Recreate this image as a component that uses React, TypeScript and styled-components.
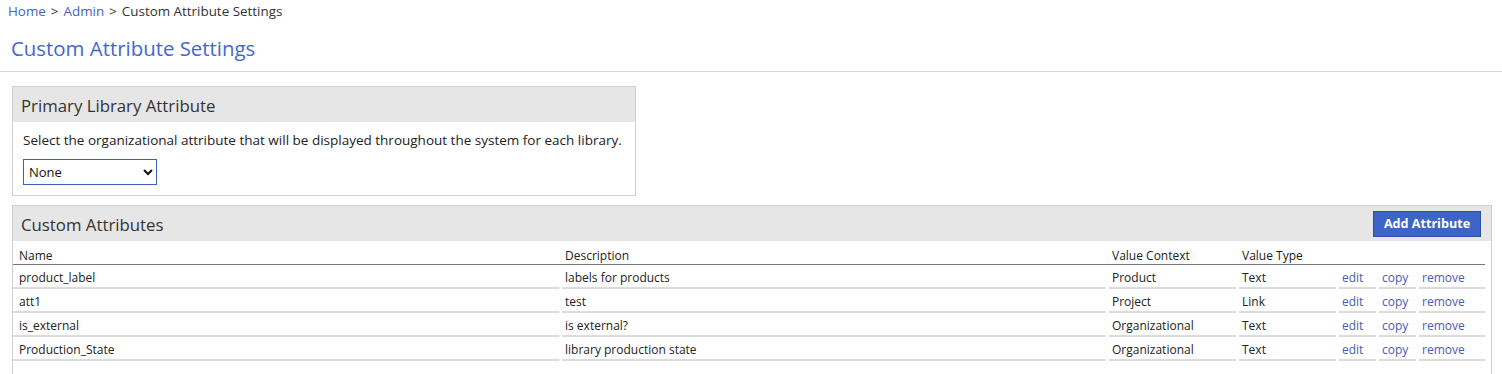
import styled, { createGlobalStyle } from "styled-components"

const GlobalStyle = createGlobalStyle`
  body {
    margin: 0;
    background: #fff;
    color: #333;
    font-family: "Open Sans", "Noto Sans", Arial, sans-serif;
  }
`

const Header = styled.header`
  border-bottom: 1px solid #d4d4d4;
  padding-bottom: 9px;
`

const Breadcrumb = styled.nav`
  padding: 2px 8px 0;
  font-size: 13.4px;
  line-height: 18px;
  color: #333;

  a {
    color: #4663c2;
    text-decoration: none;
  }
`

const Sep = styled.span`
  margin: 0 5px;
`

const Title = styled.h1`
  margin: 14px 0 0 11px;
  font-size: 20.4px;
  font-weight: 400;
  line-height: 28px;
  color: #4268c9;
`

const Content = styled.main`
  padding: 14px 10px 0 12px;
  display: flex;
  flex-direction: column;
  gap: 9px;
`

const Panel = styled.section<{ $width?: number }>`
  border: 1px solid #cfcfcf;
  width: ${(p) => (p.$width ? `${p.$width}px` : "auto")};
  box-sizing: border-box;
`

const PanelHead = styled.div`
  background: #e6e6e6;
  height: 35px;
  box-sizing: border-box;
  padding: 2px 10px 0 8px;
  display: flex;
  align-items: center;
  justify-content: space-between;
`

const PanelTitle = styled.h2`
  margin: 0;
  font-size: 16.8px;
  font-weight: 400;
  color: #333;
  line-height: 24px;
`

const PanelBody = styled.div`
  padding: 9px 10px 10px 10px;
`

const Hint = styled.p`
  margin: 0;
  font-size: 13.5px;
  line-height: 18px;
  color: #222;
`

const Select = styled.select`
  margin-top: 10px;
  width: 134px;
  height: 26px;
  border: 1px solid #3f5fc0;
  border-radius: 0;
  background: #fff;
  font-family: inherit;
  font-size: 13px;
  color: #111;
  padding: 0 1px;
`

const Button = styled.button`
  height: 26px;
  width: 108px;
  margin-top: -2px;
  padding: 0;
  background: #3d65c8;
  border: 1px solid #2e4f9f;
  color: #fff;
  font-family: inherit;
  font-weight: 700;
  font-size: 12.6px;
  cursor: pointer;
`

const Table = styled.table`
  width: 1472px;
  table-layout: fixed;
  border-collapse: collapse;
  font-size: 12px;
  color: #222;
`

const Th = styled.th<{ $w: number }>`
  text-align: left;
  font-weight: 400;
  height: 23px;
  box-sizing: border-box;
  padding: 6px 0 0 6px;
  border-bottom: 1px solid #777;
  width: ${(p) => p.$w}px;
  line-height: 17px;
  vertical-align: top;
`

const Td = styled.td`
  height: 24px;
  box-sizing: border-box;
  padding: 4px 0 0 6px;
  line-height: 18px;
  vertical-align: top;
  white-space: nowrap;
  background: linear-gradient(#dcdcdc, #dcdcdc) no-repeat right bottom / calc(100% - 3px) 2px;
  &:first-child {
    background-size: 100% 2px;
  }
`

const Action = styled.a`
  color: #4a5cb8;
  text-decoration: none;
  cursor: pointer;
`

const Spacer = styled.div`
  height: 20px;
`

const columns: [string, number][] = [
  ["Name", 546],
  ["Description", 547],
  ["Value Context", 130],
  ["Value Type", 100],
  ["", 40],
  ["", 40],
  ["", 69],
]

const rows = [
  ["product_label", "labels for products", "Product", "Text"],
  ["att1", "test", "Project", "Link"],
  ["is_external", "is external?", "Organizational", "Text"],
  ["Production_State", "library production state", "Organizational", "Text"],
]

export default function App() {
  return (
    <>
      <GlobalStyle />
      <Header>
        <Breadcrumb>
          <a href="#">Home</a>
          <Sep>&gt;</Sep>
          <a href="#">Admin</a>
          <Sep>&gt;</Sep>
          Custom Attribute Settings
        </Breadcrumb>
        <Title>Custom Attribute Settings</Title>
      </Header>
      <Content>
        <Panel $width={624}>
          <PanelHead>
            <PanelTitle>Primary Library Attribute</PanelTitle>
          </PanelHead>
          <PanelBody>
            <Hint>Select the organizational attribute that will be displayed throughout the system for each library.</Hint>
            <Select defaultValue="none">
              <option value="none">None</option>
            </Select>
          </PanelBody>
        </Panel>
        <Panel>
          <PanelHead>
            <PanelTitle>Custom Attributes</PanelTitle>
            <Button>Add Attribute</Button>
          </PanelHead>
          <Table>
            <thead>
              <tr>
                {columns.map(([label, w], i) => (
                  <Th key={i} $w={w}>{label}</Th>
                ))}
              </tr>
            </thead>
            <tbody>
              {rows.map((r) => (
                <tr key={r[0]}>
                  {r.map((cell, i) => (
                    <Td key={i}>{cell}</Td>
                  ))}
                  <Td><Action>edit</Action></Td>
                  <Td><Action>copy</Action></Td>
                  <Td><Action>remove</Action></Td>
                </tr>
              ))}
            </tbody>
          </Table>
          <Spacer />
        </Panel>
      </Content>
    </>
  )
}
